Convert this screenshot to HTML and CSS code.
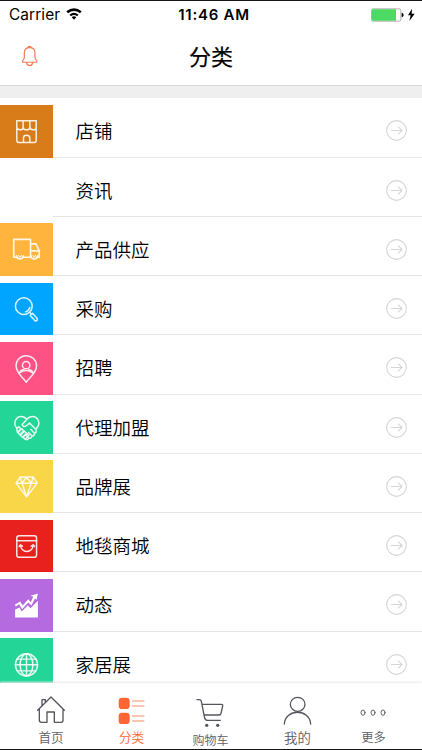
FILE: index.html
```html
<!DOCTYPE html>
<html lang="zh-CN">
<head>
<meta charset="utf-8">
<title>分类</title>
<link rel="stylesheet" href="styles.css">
</head>
<body>
<div class="phone">
  <div class="status">
    <div class="carrier">Carrier
      <svg class="wifi" viewBox="0 0 48 36"><path d="M1 10Q24-8 47 10L42 16Q24 2 6 16Z"/><path d="M10 20Q24 8 38 20L33 25Q24 17 15 25Z"/><path d="M17 28Q24 22 31 28L24 35Z"/></svg>
    </div>
    <div class="time">11:46 AM</div>
    <div class="power">
      <svg class="battery" viewBox="0 0 132 42"><rect x="1.5" y="2.5" width="88" height="37" rx="5" fill="#fff" stroke="#888" stroke-width="2"/><path d="M6 4H75V38H6Q3 38 3 35V7Q3 4 6 4Z" fill="#4cd964"/><path d="M92 14Q98 15 98 21T92 28Z"/><path d="M123 2L111 22H119L115 39L131 17H122Z"/></svg>
    </div>
  </div>
  <header class="nav">
    <svg class="bell" viewBox="0 0 46 62"><path d="M2 49H44V44Q39 40 39 34V20C39 9 31 5 23 5S7 9 7 20V34Q7 40 2 44ZM18 5Q18 1 23 1T28 5M14 50Q15 59 23 59T32 50"/></svg>
    <h1 class="title">分类</h1>
  </header>
  <main class="list">
    <div class="row">
      <div class="tile shop"><svg viewBox="0 0 158 158"><path d="M50 47H108V66Q108 74 99 74T89 66Q89 74 79 74T69 66Q69 74 60 74T50 66ZM69 47V67M89 47V67M50 71V105Q50 112 57 112H101Q108 112 108 105V71M70 111V98Q70 90 79 90T89 98V111"/></svg></div>
      <div class="cell"><span>店铺</span><svg class="go" viewBox="0 0 64 64"><circle cx="32" cy="32" r="30"/><path d="M15 32H48M37 20L49 32L37 44"/></svg></div>
    </div>
    <div class="row">
      <div class="tile blank"></div>
      <div class="cell"><span>资讯</span><svg class="go" viewBox="0 0 64 64"><circle cx="32" cy="32" r="30"/><path d="M15 32H48M37 20L49 32L37 44"/></svg></div>
    </div>
    <div class="row">
      <div class="tile supply"><svg viewBox="0 0 158 158"><path d="M49 102H41V49H91V102H70M91 62H107L117 82V102H111M91 83H116"/><path d="M49 98Q50 107 59 107T69 98M92 98Q93 107 102 107T112 98"/><path class="thin" d="M55 97L59 101L64 97M98 97L102 101L106 97"/></svg></div>
      <div class="cell"><span>产品供应</span><svg class="go" viewBox="0 0 64 64"><circle cx="32" cy="32" r="30"/><path d="M15 32H48M37 20L49 32L37 44"/></svg></div>
    </div>
    <div class="row">
      <div class="tile buy"><svg viewBox="0 0 158 158"><circle cx="71" cy="69" r="25"/><path d="M88 87L94 93M90 97L97 90L111 106Q113 113 105 113ZM76 86Q86 83 89 73"/></svg></div>
      <div class="cell"><span>采购</span><svg class="go" viewBox="0 0 64 64"><circle cx="32" cy="32" r="30"/><path d="M15 32H48M37 20L49 32L37 44"/></svg></div>
    </div>
    <div class="row">
      <div class="tile jobs"><svg viewBox="0 0 158 158"><path d="M78 120C68 105 48 93 48 71C48 53 61 41 78 41S109 53 109 71C109 93 88 105 78 120ZM57 93Q61 83 71 82M99 93Q95 83 86 82M58 92Q78 78 98 92"/><circle cx="78" cy="69" r="11"/></svg></div>
      <div class="cell"><span>招聘</span><svg class="go" viewBox="0 0 64 64"><circle cx="32" cy="32" r="30"/><path d="M15 32H48M37 20L49 32L37 44"/></svg></div>
    </div>
    <div class="row">
      <div class="tile agent"><svg viewBox="0 0 158 158"><path d="M51 82C36 65 49 46 63 46Q73 46 80 55Q86 46 97 46C112 46 124 66 108 83M80 55L66 70Q70 82 82 71L88 66L108 86M50 83L56 77L62 83L52 94ZM54 94L65 83L71 89L59 101ZM61 102L73 90L79 96L67 108ZM69 109L80 97L86 103L75 114ZM75 113Q82 119 86 110Q94 113 95 104Q103 105 103 96Q110 95 107 86M86 110L79 103M95 104L85 94M103 96L92 85"/></svg></div>
      <div class="cell"><span>代理加盟</span><svg class="go" viewBox="0 0 64 64"><circle cx="32" cy="32" r="30"/><path d="M15 32H48M37 20L49 32L37 44"/></svg></div>
    </div>
    <div class="row">
      <div class="tile brand"><svg viewBox="0 0 158 158"><path d="M60 51H99L111 69L79 110L48 69ZM48 69H111M60 51L66 69L79 110L93 69L99 51M66 68L79 52L93 68"/></svg></div>
      <div class="cell"><span>品牌展</span><svg class="go" viewBox="0 0 64 64"><circle cx="32" cy="32" r="30"/><path d="M15 32H48M37 20L49 32L37 44"/></svg></div>
    </div>
    <div class="row">
      <div class="tile mall"><svg viewBox="0 0 158 158"><rect x="50" y="47" width="59" height="64" rx="7"/><path d="M50 62H109M61 76Q64 94 80 94T99 76M57 79L61 74L67 78M93 78L99 74L103 79"/></svg></div>
      <div class="cell"><span>地毯商城</span><svg class="go" viewBox="0 0 64 64"><circle cx="32" cy="32" r="30"/><path d="M15 32H48M37 20L49 32L37 44"/></svg></div>
    </div>
    <div class="row">
      <div class="tile news"><svg viewBox="0 0 158 158"><path class="solid" d="M45 91L58 85L65 97L83 78L91 87L113 65V115H45ZM44 77L60 67L68 79L84 60L92 69L99 53L91 50L113 43L109 62L104 58L94 79L84 70L66 90L57 75L47 82Z"/></svg></div>
      <div class="cell"><span>动态</span><svg class="go" viewBox="0 0 64 64"><circle cx="32" cy="32" r="30"/><path d="M15 32H48M37 20L49 32L37 44"/></svg></div>
    </div>
    <div class="row">
      <div class="tile home"><svg viewBox="0 0 158 158"><circle cx="79" cy="80" r="33"/><ellipse cx="79" cy="80" rx="19" ry="33"/><path d="M79 47V113M51 63H107M46 80H112M51 98H107"/></svg></div>
      <div class="cell"><span>家居展</span><svg class="go" viewBox="0 0 64 64"><circle cx="32" cy="32" r="30"/><path d="M15 32H48M37 20L49 32L37 44"/></svg></div>
    </div>
  </main>
  <nav class="tabs">
    <a class="tab"><svg viewBox="0 0 84 90"><path d="M2 52L42 12L82 52M7 48V82Q7 88 13 88H30V57H52V88H72Q78 88 78 82V48M15 39V20H25V29"/></svg><span class="label">首页</span></a>
    <a class="tab active"><svg viewBox="0 0 84 90"><rect class="block" x="2" y="14" width="33" height="34" rx="10"/><rect class="block" x="2" y="59" width="33" height="34" rx="10"/><path class="lines" d="M43 24H78M43 39H78M43 69H78M43 84H78"/></svg><span class="label">分类</span></a>
    <a class="tab cart"><svg viewBox="0 0 84 90"><path d="M0 20H7Q12 20 13 25L23 75Q25 82 32 82H70M15 34H73Q78 34 77 39L72 61Q71 66 66 66H21"/><circle class="wheel" cx="29" cy="97" r="5"/><circle class="wheel" cx="62" cy="97" r="5"/></svg><span class="label">购物车</span></a>
    <a class="tab mine"><svg viewBox="0 0 84 90"><ellipse cx="41" cy="34" rx="22" ry="21"/><path d="M1 93C4 46 77 46 80 93"/></svg><span class="label">我的</span></a>
    <a class="tab more"><svg viewBox="0 0 84 90"><ellipse cx="9" cy="59" rx="6" ry="8"/><ellipse cx="39" cy="59" rx="6" ry="8"/><ellipse cx="69" cy="59" rx="6" ry="8"/></svg><span class="label">更多</span></a>
  </nav>
</div>
</body>
</html>
```
FILE: styles.css
```css
* { box-sizing: border-box; }

body {
  margin: 0;
  background: #fff;
  color: #000;
  font-family: "Liberation Sans", "Noto Sans CJK SC", sans-serif;
}

svg {
  display: block;
  overflow: visible;
}

.phone {
  width: 422px;
  height: 750px;
  display: flex;
  flex-direction: column;
  overflow: hidden;
  border-top: 1px solid #171717;
  border-bottom: 1px solid #171717;
}

.status {
  flex: none;
  height: 27px;
  padding: 0 7px 0 9px;
  display: grid;
  grid-template-columns: 1fr auto 1fr;
  align-items: center;
  font: 15.4px/27px Inter, sans-serif;
}

.carrier {
  display: flex;
  align-items: center;
  gap: 6px;
  letter-spacing: 0.1px;
}

.wifi {
  width: 16px;
  height: 12px;
  margin-bottom: 2px;
}

.time {
  padding-left: 4px;
  font-weight: 600;
  font-size: 15px;
  letter-spacing: 0.75px;
}

.power {
  display: flex;
  justify-content: flex-end;
}

.battery {
  width: 44px;
  height: 14px;
}

.nav {
  flex: none;
  height: 58px;
  display: grid;
  grid-template-columns: 1fr auto 1fr;
  align-items: center;
  border-bottom: 1px solid #d8d8d8;
}

.bell {
  width: 15.3px;
  height: 20.6px;
  margin-left: 22px;
  fill: none;
  stroke: #f47c55;
  stroke-width: 3.6;
}

.title {
  margin: 0;
  padding-bottom: 4px;
  font: 400 22px/52px "Noto Sans CJK SC", sans-serif;
  -webkit-text-stroke: 0.2px #000;
}

.list {
  flex: 1;
  min-height: 0;
  padding-top: 0.3px;
  overflow: hidden;
  border-top: 12px solid #efefef;
}

.row {
  height: 59.25px;
  display: flex;
  align-items: flex-end;
}

.tile {
  width: 53px;
  height: 52.7px;
  flex: none;
}

.tile svg {
  width: 53px;
  height: 53px;
  fill: none;
  stroke: rgba(255, 255, 255, 0.88);
  stroke-width: 4.4;
  stroke-linejoin: round;
  stroke-linecap: round;
}

.tile .thin { stroke-width: 3; }
.tile .solid { fill: #fff; stroke: none; }

.shop { background: #d77c19; }
.supply { background: #ffb43e; }
.supply svg { stroke-width: 5; }
.buy { background: #00a5ff; }
.jobs { background: #ff5284; }
.agent { background: #23d698; }
.brand { background: #f9d548; }
.mall { background: #e8211e; }
.news { background: #b56ae0; }
.home { background: #23d698; }

.cell {
  flex: 1;
  height: 100%;
  padding: 7px 15px 0 22.6px;
  display: flex;
  align-items: center;
  justify-content: space-between;
  border-bottom: 1px solid #e4e5e7;
  font: 350 18.5px/28px "Noto Sans CJK SC", sans-serif;
}

.cell span {
  padding-bottom: 1px;
}

.go {
  width: 21px;
  height: 21px;
  fill: none;
  stroke: #d6d6d6;
  stroke-width: 3.4;
}

.tabs {
  flex: none;
  height: 66px;
  display: grid;
  grid-template-columns: 102px 59px 99px 75px 77px;
  background: #fff;
  box-shadow: 0 -1px 2px #e9e9e9;
  position: relative;
}

.tab {
  display: flex;
  flex-direction: column;
  align-items: center;
  color: #5c5c64;
}

.tab svg {
  width: 28px;
  height: 30px;
  margin-top: 10px;
  fill: none;
  stroke: #555560;
  stroke-width: 4;
  stroke-linecap: round;
  stroke-linejoin: round;
}

.tab .wheel {
  fill: #555560;
  stroke: none;
}

.label {
  margin-top: 5px;
  white-space: nowrap;
  font: 350 12.6px/18px "Noto Sans CJK SC", sans-serif;
}

.tab.active { color: #ff6633; }
.active .block { fill: #ff6633; stroke: none; }
.active .lines { stroke: #f58b68; stroke-width: 3; }

.cart .label {
  margin-top: 8px;
  font-size: 12px;
}

.mine .label { font-size: 13.4px; }
.more .label { font-size: 12.2px; }
.tab.more svg { stroke-width: 2.8; }
```
